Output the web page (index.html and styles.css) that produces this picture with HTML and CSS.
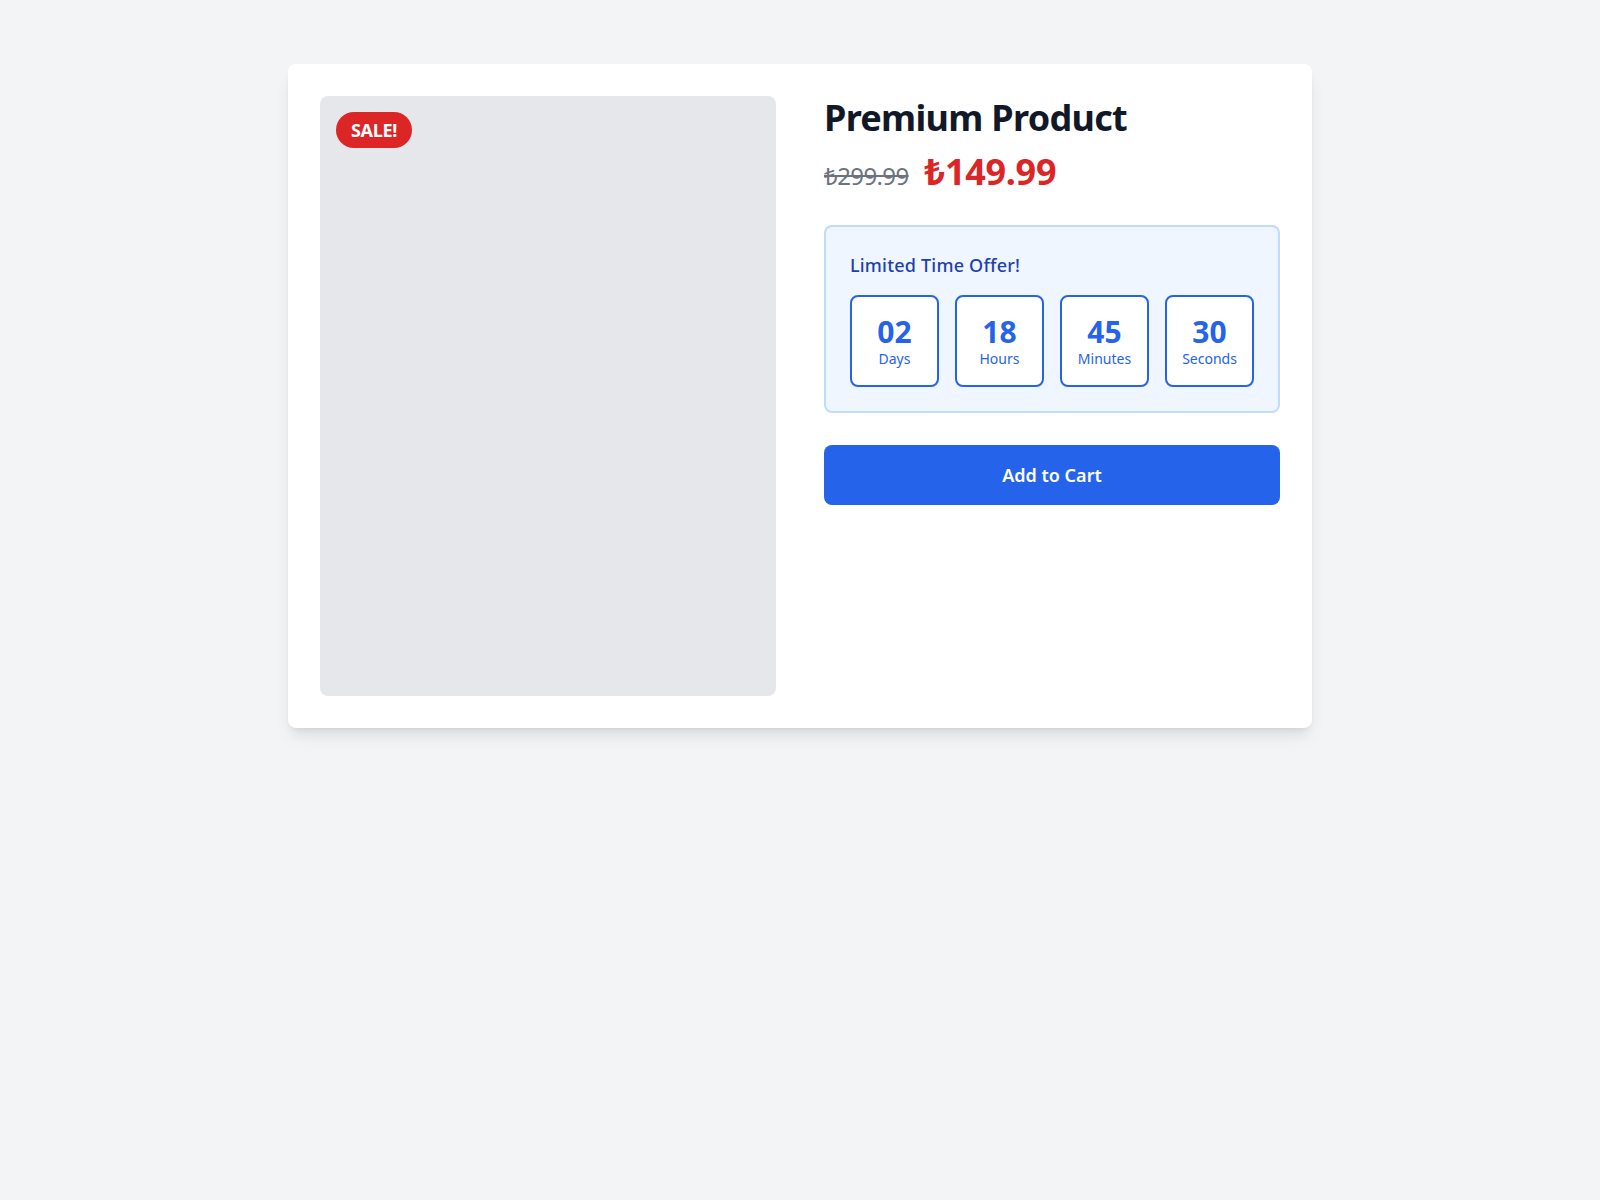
FILE: index.html
```html
<!DOCTYPE html>
<html lang="en">
<head>
<meta charset="utf-8">
<title>Premium Product</title>
<link rel="stylesheet" href="styles.css">
</head>
<body>
<main class="page">
  <section class="card">
    <div class="media">
      <span class="badge">SALE!</span>
    </div>
    <div class="info">
      <h1 class="title">Premium Product</h1>
      <div class="prices">
        <span class="old-price">₺299.99</span>
        <span class="new-price">₺149.99</span>
      </div>
      <div class="offer">
        <h2 class="offer-title">Limited Time Offer!</h2>
        <div class="timer">
          <div class="unit"><div class="num">02</div><div class="lbl">Days</div></div>
          <div class="unit"><div class="num">18</div><div class="lbl">Hours</div></div>
          <div class="unit"><div class="num">45</div><div class="lbl">Minutes</div></div>
          <div class="unit"><div class="num">30</div><div class="lbl">Seconds</div></div>
        </div>
      </div>
      <button class="cart-btn">Add to Cart</button>
    </div>
  </section>
</main>
</body>
</html>
```
FILE: styles.css
```css
* { box-sizing: border-box; }
html, body { margin: 0; padding: 0; }
body {
  background: #f3f4f6;
  font-family: "Noto Sans", "Open Sans", sans-serif;
  color: #111827;
}
.page {
  padding: 64px 0;
  display: flex;
  justify-content: center;
}
.card {
  width: 1024px;
  background: #fff;
  border-radius: 8px;
  box-shadow: 0 10px 15px -3px rgba(0,0,0,0.1), 0 4px 6px -4px rgba(0,0,0,0.1);
  padding: 32px;
  display: grid;
  grid-template-columns: 1fr 1fr;
  gap: 48px;
}
.media {
  position: relative;
  height: 600px;
  background: #e5e7eb;
  border-radius: 8px;
}
.badge {
  position: absolute;
  top: 16px;
  left: 16px;
  background: #dc2626;
  color: #fff;
  font-weight: 700;
  font-size: 18px;
  line-height: 28px;
  padding: 4px 15px;
  border-radius: 9999px;
  letter-spacing: -0.3px;
}
.title {
  margin: 0 0 14px;
  padding-top: 2px;
  font-size: 36px;
  line-height: 40px;
  font-weight: 700;
  color: #111827;
  letter-spacing: -0.7px;
}
.prices {
  display: flex;
  align-items: baseline;
  gap: 16px;
  margin-bottom: 33px;
}
.old-price {
  font-size: 24px;
  line-height: 32px;
  color: #6b7280;
  text-decoration: line-through;
  letter-spacing: -0.6px;
}
.new-price {
  font-size: 36px;
  line-height: 40px;
  font-weight: 700;
  color: #dc2626;
  letter-spacing: -0.3px;
}
.offer {
  background: #eff6ff;
  border: 2px solid #bfdbfe;
  border-radius: 8px;
  padding: 24px;
  margin-bottom: 32px;
}
.offer-title {
  margin: 0 0 16px;
  font-size: 18px;
  line-height: 28px;
  font-weight: 500;
  color: #1e40af;
  letter-spacing: 0.2px;
}
.timer {
  display: grid;
  grid-template-columns: repeat(4, 1fr);
  gap: 16px;
}
.unit {
  background: #fff;
  border: 2px solid #2563eb;
  border-radius: 8px;
  padding: 17px 8px 16px;
  text-align: center;
  color: #2563eb;
}
.num {
  font-size: 30px;
  line-height: 35px;
  font-weight: 700;
}
.lbl {
  font-size: 14px;
  line-height: 20px;
}
.cart-btn {
  display: block;
  width: 100%;
  border: 0;
  border-radius: 8px;
  background: #2563eb;
  color: #fff;
  font-family: inherit;
  font-size: 18px;
  line-height: 28px;
  font-weight: 600;
  padding: 16px;
  cursor: pointer;
}
```
